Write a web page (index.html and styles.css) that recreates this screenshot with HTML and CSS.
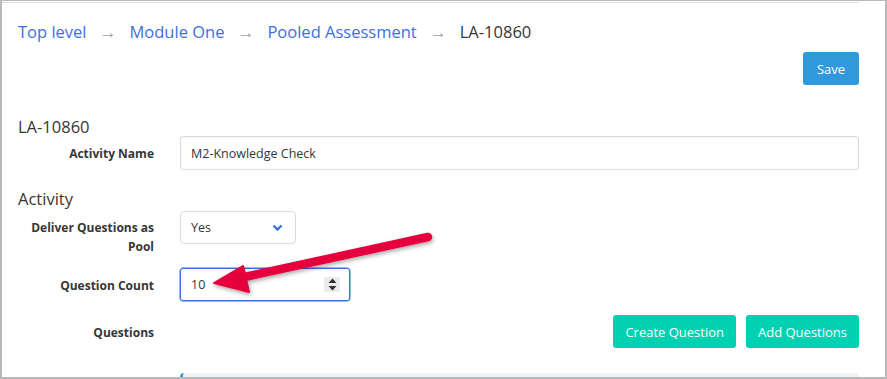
FILE: index.html
```html
<!DOCTYPE html>
<html lang="en">
<head>
    <meta charset="UTF-8">
    <meta name="viewport" content="width=device-width, initial-scale=1.0">
    <title>LA-10860</title>
    <link rel="stylesheet" href="styles.css">
</head>
<body>
    <div class="frame">
        <div class="page">
            <nav class="breadcrumb">
                <a href="#">Top level</a>
                <span class="sep">&rarr;</span>
                <a href="#">Module One</a>
                <span class="sep">&rarr;</span>
                <a href="#">Pooled Assessment</a>
                <span class="sep">&rarr;</span>
                <span class="current">LA-10860</span>
            </nav>

            <div class="toolbar">
                <button class="button is-info">Save</button>
            </div>

            <h2 class="section-title">LA-10860</h2>
            <div class="field first">
                <label class="field-label">Activity Name</label>
                <div class="field-body">
                    <input class="input wide" type="text" value="M2-Knowledge Check">
                </div>
            </div>

            <h2 class="section-title activity">Activity</h2>
            <div class="field pool">
                <label class="field-label two-line">Deliver Questions as Pool</label>
                <div class="field-body">
                    <div class="select">
                        <span>Yes</span>
                        <svg width="11" height="8" viewBox="0 0 11 8"><path d="M1.5 1.5 L5.5 5.5 L9.5 1.5" fill="none" stroke="#3273dc" stroke-width="2.4"/></svg>
                    </div>
                </div>
            </div>

            <div class="field count">
                <label class="field-label">Question Count</label>
                <div class="field-body">
                    <div class="input number is-focused">
                        <input type="text" value="10">
                        <span class="spinner">
                            <svg width="9" height="13" viewBox="0 0 9 13"><path d="M4.5 0.5 L8.5 5 L0.5 5 Z M0.5 8 L8.5 8 L4.5 12.5 Z" fill="#333"/></svg>
                        </span>
                    </div>
                </div>
            </div>

            <div class="field">
                <label class="field-label">Questions</label>
                <div class="field-body buttons">
                    <button class="button is-primary">Create Question</button>
                    <button class="button is-primary">Add Questions</button>
                </div>
            </div>

            <div class="field">
                <div class="field-label"></div>
                <div class="field-body">
                    <div class="message"></div>
                </div>
            </div>
        </div>

        <svg class="callout" width="887" height="379" viewBox="0 0 887 379">
            <defs>
                <filter id="shadow" x="-20%" y="-50%" width="140%" height="200%">
                    <feDropShadow dx="1" dy="2" stdDeviation="2" flood-color="#000" flood-opacity="0.35"/>
                </filter>
            </defs>
            <g filter="url(#shadow)" fill="#e5003c" stroke="#e5003c">
                <line x1="240" y1="278" x2="428" y2="237" stroke-width="8.5" stroke-linecap="round"/>
                <polygon points="214,283 243,266 249,292" stroke-width="2" stroke-linejoin="round"/>
            </g>
        </svg>
    </div>
</body>
</html>
```

FILE: styles.css
```css
body {
    margin: 0;
    padding: 0;
    background: #fff;
    font-family: 'Open Sans', 'Noto Sans', sans-serif;
    color: #363636;
}

.frame {
    position: relative;
    width: 887px;
    height: 379px;
    box-sizing: border-box;
    border: 2px solid #b9b9b9;
    border-top-width: 1px;
    overflow: hidden;
}

.page {
    margin-right: 26px;
    border-top: 1px solid #dcdcdc;
    margin-top: 1px;
    padding: 0 0 0 16px;
}

.breadcrumb {
    display: flex;
    align-items: baseline;
    gap: 13px;
    padding-top: 17px;
    height: 26px;
    font-size: 16.5px;
}

.breadcrumb a {
    color: #3e6fdc;
    text-decoration: none;
}

.breadcrumb .sep {
    color: #a0a0a0;
    font-size: 17px;
}

.breadcrumb .current {
    color: #363636;
}

.toolbar {
    display: flex;
    justify-content: flex-end;
    margin-top: 6px;
}

.button {
    font-family: 'Open Sans', 'Noto Sans', sans-serif;
    font-size: 13px;
    color: #fff;
    border: none;
    border-radius: 3px;
    height: 33px;
    padding: 0 12px;
    cursor: pointer;
}

.button.is-info {
    background: #3298dc;
    width: 56px;
    padding: 0;
}

.button.is-primary {
    background: #00d1b2;
}

.section-title {
    margin: 31px 0 0;
    font-size: 16.5px;
    font-weight: 400;
    color: #363636;
    line-height: 22px;
}

.section-title.activity {
    margin-top: 18px;
}

.field {
    display: flex;
    gap: 26px;
    margin-top: 14px;
}

.field.first {
    margin-top: -2px;
}

.field.pool {
    margin-top: 1px;
}

.field.count {
    margin-top: 12px;
}

.field-label {
    width: 136px;
    flex-shrink: 0;
    text-align: right;
    font-size: 12px;
    font-weight: 700;
    color: #363636;
    padding-top: 8px;
    line-height: 19px;
}

.field-label.two-line {
    padding-left: 6px;
    padding-top: 7px;
    box-sizing: border-box;
}

.field-body {
    flex: 1;
    display: flex;
}

.field-body.buttons {
    justify-content: flex-end;
    gap: 10px;
}

.input {
    box-sizing: border-box;
    height: 34px;
    border: 1px solid #dbdbdb;
    border-radius: 3px;
    padding: 0 10px;
    font-family: 'Open Sans', 'Noto Sans', sans-serif;
    font-size: 12.5px;
    color: #363636;
    box-shadow: inset 0 1px 2px rgba(10, 10, 10, 0.05);
}

.input.wide {
    width: 100%;
}

.select {
    box-sizing: border-box;
    width: 116px;
    height: 33px;
    border: 1px solid #dbdbdb;
    border-radius: 4px;
    display: flex;
    align-items: center;
    justify-content: space-between;
    padding: 0 12px 0 10px;
    font-size: 12.5px;
}

.input.number {
    width: 170px;
    height: 33px;
    display: flex;
    align-items: center;
    padding-right: 9px;
}

.input.number.is-focused {
    border-color: #3273dc;
    box-shadow: 0 0 0 0.5px #3273dc;
}

.input.number input {
    flex: 1;
    min-width: 0;
    border: none;
    outline: none;
    padding: 0;
    font-family: inherit;
    font-size: 12.5px;
    color: #363636;
    background: transparent;
}

.spinner {
    width: 16px;
    height: 15px;
    background: #ececec;
    display: flex;
    align-items: center;
    justify-content: center;
}

.message {
    width: 100%;
    height: 20px;
    margin-top: 11px;
    background: #eef3fa;
    border-left: 3px solid #3298dc;
    border-radius: 4px;
}

.callout {
    position: absolute;
    top: -1px;
    left: -2px;
    pointer-events: none;
}
```
